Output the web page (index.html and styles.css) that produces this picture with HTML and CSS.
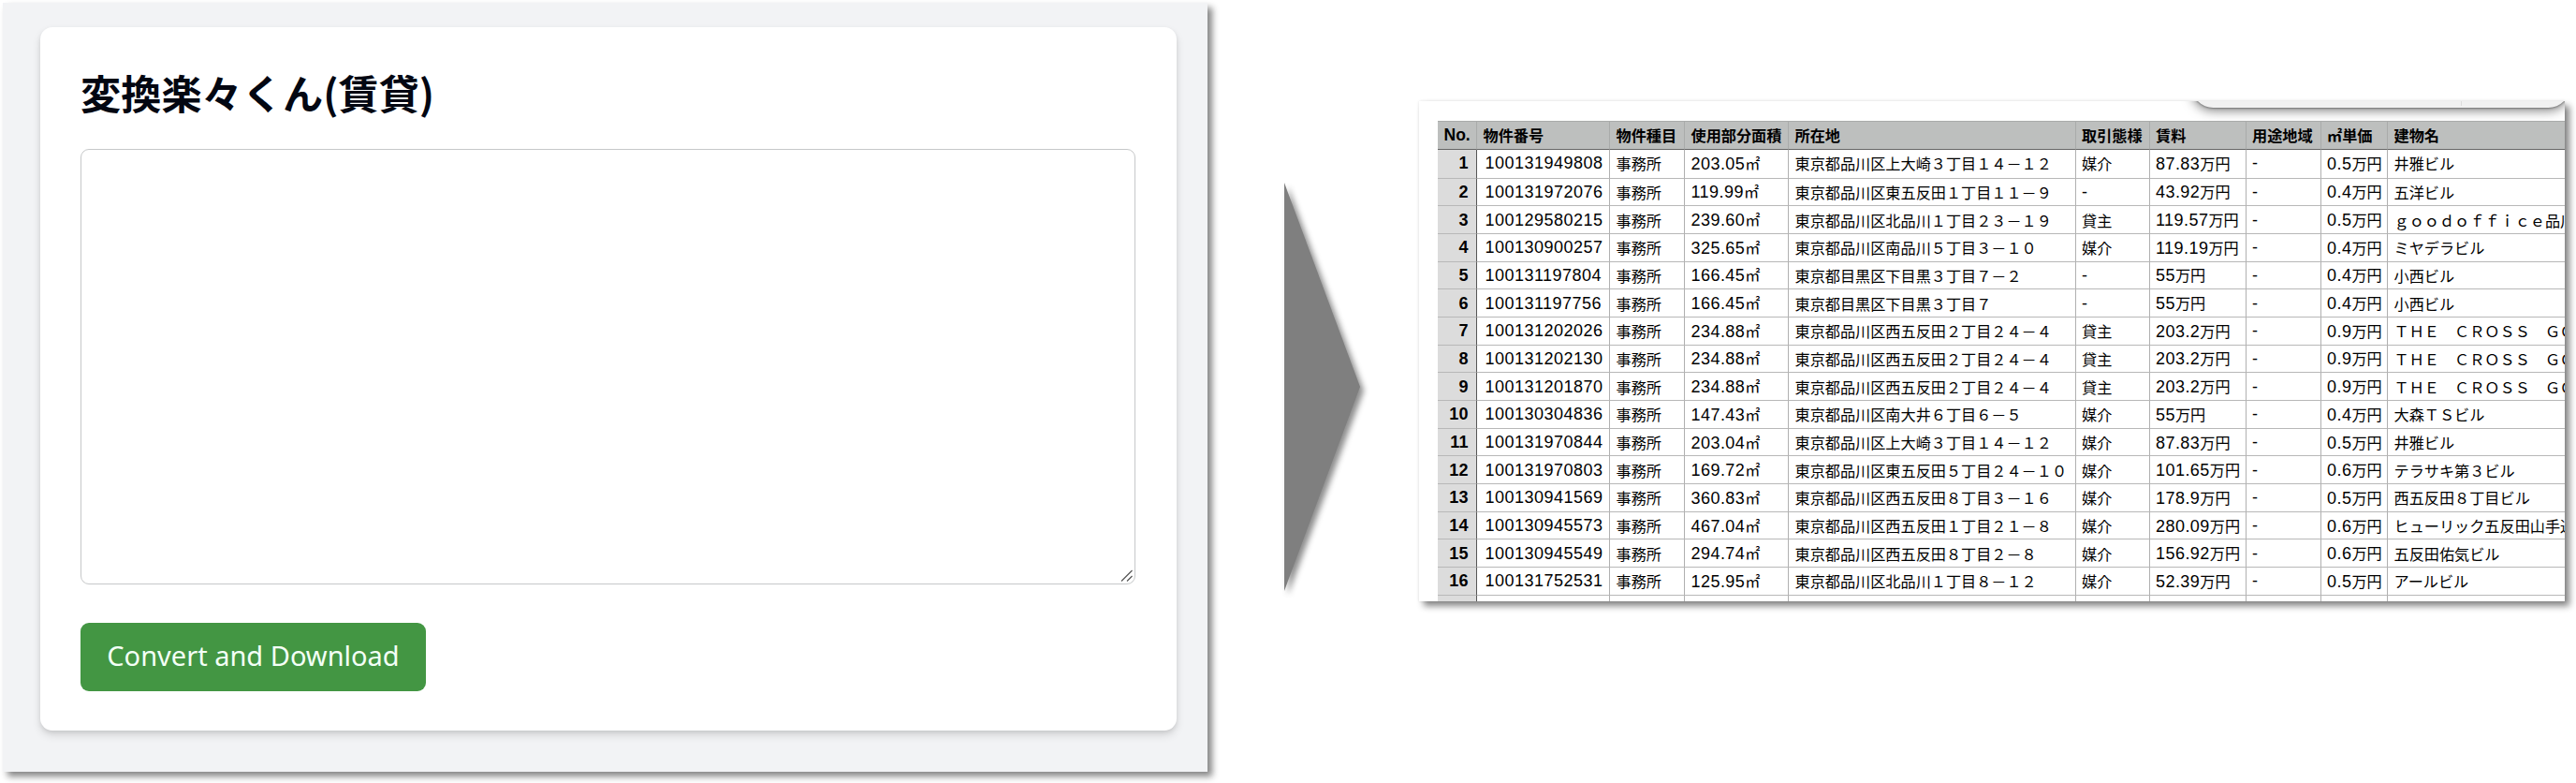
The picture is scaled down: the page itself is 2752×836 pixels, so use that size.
FILE: index.html
```html
<!DOCTYPE html>
<html lang="ja">
<head>
<meta charset="utf-8">
<title>変換楽々くん(賃貸)</title>
<link rel="stylesheet" href="styles.css">
</head>
<body>
<main class="stage">
  <section class="app">
    <div class="card">
      <h1 class="title">変換楽々くん(賃貸)</h1>
      <div class="field">
        <svg class="grip" viewBox="0 0 14 14"><path d="M1 12.500L12.500 1M7 12.500L12.500 7"/></svg>
      </div>
      <button class="convert">Convert and Download</button>
    </div>
  </section>
  <svg class="arrow" viewBox="0 0 81 436"><path d="M0 0L81 218L0 436Z"/></svg>
  <section class="sheet">
    <div class="viewport">
    <div class="toolbar"><i class="divider"></i></div>
    <table class="grid">
      <colgroup><col class="c0"><col class="c1"><col class="c2"><col class="c3"><col class="c4"><col class="c5"><col class="c6"><col class="c7"><col class="c8"><col class="c9"></colgroup>
      <thead>
        <tr><th class="no">No.</th><th>物件番号</th><th>物件種目</th><th>使用部分面積</th><th>所在地</th><th>取引態様</th><th>賃料</th><th>用途地域</th><th>㎡単価</th><th>建物名</th></tr>
      </thead>
      <tbody>
        <tr class="first"><th>1</th><td class="id">100131949808</td><td>事務所</td><td><span class="n">203.05</span>㎡</td><td>東京都品川区上大崎３丁目１４－１２</td><td>媒介</td><td><span class="n">87.83</span>万円</td><td class="n">-</td><td><span class="n">0.5</span>万円</td><td>井雅ビル</td></tr>
        <tr><th>2</th><td class="id">100131972076</td><td>事務所</td><td><span class="n">119.99</span>㎡</td><td>東京都品川区東五反田１丁目１１－９</td><td class="n">-</td><td><span class="n">43.92</span>万円</td><td class="n">-</td><td><span class="n">0.4</span>万円</td><td>五洋ビル</td></tr>
        <tr><th>3</th><td class="id">100129580215</td><td>事務所</td><td><span class="n">239.60</span>㎡</td><td>東京都品川区北品川１丁目２３－１９</td><td>貸主</td><td><span class="n">119.57</span>万円</td><td class="n">-</td><td><span class="n">0.5</span>万円</td><td>ｇｏｏｄｏｆｆｉｃｅ品川</td></tr>
        <tr><th>4</th><td class="id">100130900257</td><td>事務所</td><td><span class="n">325.65</span>㎡</td><td>東京都品川区南品川５丁目３－１０</td><td>媒介</td><td><span class="n">119.19</span>万円</td><td class="n">-</td><td><span class="n">0.4</span>万円</td><td>ミヤデラビル</td></tr>
        <tr><th>5</th><td class="id">100131197804</td><td>事務所</td><td><span class="n">166.45</span>㎡</td><td>東京都目黒区下目黒３丁目７－２</td><td class="n">-</td><td><span class="n">55</span>万円</td><td class="n">-</td><td><span class="n">0.4</span>万円</td><td>小西ビル</td></tr>
        <tr><th>6</th><td class="id">100131197756</td><td>事務所</td><td><span class="n">166.45</span>㎡</td><td>東京都目黒区下目黒３丁目７</td><td class="n">-</td><td><span class="n">55</span>万円</td><td class="n">-</td><td><span class="n">0.4</span>万円</td><td>小西ビル</td></tr>
        <tr><th>7</th><td class="id">100131202026</td><td>事務所</td><td><span class="n">234.88</span>㎡</td><td>東京都品川区西五反田２丁目２４－４</td><td>貸主</td><td><span class="n">203.2</span>万円</td><td class="n">-</td><td><span class="n">0.9</span>万円</td><td>ＴＨＥ　ＣＲＯＳＳ　ＧＯ</td></tr>
        <tr><th>8</th><td class="id">100131202130</td><td>事務所</td><td><span class="n">234.88</span>㎡</td><td>東京都品川区西五反田２丁目２４－４</td><td>貸主</td><td><span class="n">203.2</span>万円</td><td class="n">-</td><td><span class="n">0.9</span>万円</td><td>ＴＨＥ　ＣＲＯＳＳ　ＧＯ</td></tr>
        <tr><th>9</th><td class="id">100131201870</td><td>事務所</td><td><span class="n">234.88</span>㎡</td><td>東京都品川区西五反田２丁目２４－４</td><td>貸主</td><td><span class="n">203.2</span>万円</td><td class="n">-</td><td><span class="n">0.9</span>万円</td><td>ＴＨＥ　ＣＲＯＳＳ　ＧＯ</td></tr>
        <tr><th>10</th><td class="id">100130304836</td><td>事務所</td><td><span class="n">147.43</span>㎡</td><td>東京都品川区南大井６丁目６－５</td><td>媒介</td><td><span class="n">55</span>万円</td><td class="n">-</td><td><span class="n">0.4</span>万円</td><td>大森ＴＳビル</td></tr>
        <tr><th>11</th><td class="id">100131970844</td><td>事務所</td><td><span class="n">203.04</span>㎡</td><td>東京都品川区上大崎３丁目１４－１２</td><td>媒介</td><td><span class="n">87.83</span>万円</td><td class="n">-</td><td><span class="n">0.5</span>万円</td><td>井雅ビル</td></tr>
        <tr><th>12</th><td class="id">100131970803</td><td>事務所</td><td><span class="n">169.72</span>㎡</td><td>東京都品川区東五反田５丁目２４－１０</td><td>媒介</td><td><span class="n">101.65</span>万円</td><td class="n">-</td><td><span class="n">0.6</span>万円</td><td>テラサキ第３ビル</td></tr>
        <tr><th>13</th><td class="id">100130941569</td><td>事務所</td><td><span class="n">360.83</span>㎡</td><td>東京都品川区西五反田８丁目３－１６</td><td>媒介</td><td><span class="n">178.9</span>万円</td><td class="n">-</td><td><span class="n">0.5</span>万円</td><td>西五反田８丁目ビル</td></tr>
        <tr><th>14</th><td class="id">100130945573</td><td>事務所</td><td><span class="n">467.04</span>㎡</td><td>東京都品川区西五反田１丁目２１－８</td><td>媒介</td><td><span class="n">280.09</span>万円</td><td class="n">-</td><td><span class="n">0.6</span>万円</td><td>ヒューリック五反田山手通</td></tr>
        <tr><th>15</th><td class="id">100130945549</td><td>事務所</td><td><span class="n">294.74</span>㎡</td><td>東京都品川区西五反田８丁目２－８</td><td>媒介</td><td><span class="n">156.92</span>万円</td><td class="n">-</td><td><span class="n">0.6</span>万円</td><td>五反田佑気ビル</td></tr>
        <tr><th>16</th><td class="id">100131752531</td><td>事務所</td><td><span class="n">125.95</span>㎡</td><td>東京都品川区北品川１丁目８－１２</td><td>媒介</td><td><span class="n">52.39</span>万円</td><td class="n">-</td><td><span class="n">0.5</span>万円</td><td>アールビル</td></tr>
        <tr><th></th><td></td><td></td><td></td><td></td><td></td><td></td><td></td><td></td><td></td></tr>
      </tbody>
    </table>
    </div>
  </section>
</main>
</body>
</html>
```
FILE: styles.css
```css
* { box-sizing: border-box; }
body { margin: 0; background: #fff; font-family: "Noto Sans CJK JP", sans-serif; }
.stage { display: flex; align-items: flex-start; width: 2752px; height: 836px; padding: 3px 0 0 3px; overflow: hidden; }
.app { flex: none; width: 1287px; height: 821px; padding: 26px 33px 44px 40px; background: #f2f3f5; box-shadow: 5px 5px 7px rgba(0,0,0,.48); }
.card { height: 751px; padding: 40px 44px 0 43px; background: #fff; border-radius: 13px; box-shadow: 0 5px 10px rgba(0,0,0,.12), 0 2px 4px rgba(0,0,0,.08); }
.title { margin: 0 0 32px; font-size: 43.200px; line-height: 58px; font-weight: 700; color: #030712; white-space: nowrap; }
.field { display: flex; justify-content: flex-end; align-items: flex-end; width: 1127px; height: 465px; padding: 1px; border: 1.5px solid #c6c8c9; border-radius: 9px; }
.grip { width: 14px; height: 14px; fill: none; stroke: #555; stroke-width: 1.2; }
.convert { display: block; width: 369px; height: 73px; margin: 41px 0 0; padding: 0 0 3px; border: 0; border-radius: 9px; background: #439643; color: #f3fff6; font: 400 29px/70px "Noto Sans", sans-serif; white-space: nowrap; }
.arrow { flex: none; width: 81px; height: 436px; margin: 192px 0 0 82px; overflow: visible; fill: #7f7f7f; filter: drop-shadow(4px 4px 3px rgba(0,0,0,.45)); }
.sheet { flex: none; width: 1224px; height: 534px; margin: 105px 0 0 63px; background: #fff; box-shadow: 5px 5px 7px rgba(0,0,0,.48), 0 0 3px rgba(0,0,0,.1); }
.viewport { position: relative; height: 534px; padding: 21px 0 0 20px; overflow: hidden; }
.toolbar { position: absolute; top: -40px; right: -6px; width: 405px; height: 47px; border-radius: 24px; background: #f1f1f1; box-shadow: 0 3px 12px rgba(0,0,0,.5), 0 1px 2px rgba(0,0,0,.3); }
.divider { position: absolute; right: 116px; bottom: 2px; width: 1px; height: 30px; background: #ddd; }
.grid { position: relative; width: 1220px; border-collapse: separate; border-spacing: 0; border-top: 1px solid #a9abaa; table-layout: fixed; font-size: 16.150px; color: #000; }
.grid th, .grid td { height: 29.700px; padding: 0 0 0 6.500px; border-right: 1px solid #b0b0b0; border-bottom: 1px solid #b8b8b8; text-align: left; font-weight: 400; line-height: 26px; white-space: nowrap; }
.grid .first th, .grid .first td { height: 31px; padding-bottom: 1px; }
.grid thead th { height: 29.500px; background: #bdbfbe; font-weight: 700; border-right-color: #a9abaa; border-bottom-color: #666; }
.grid tbody th { padding: 0 8px 0 0; background: #dcdcdc; border-right-color: #555; text-align: right; font: 700 18px/26px "Liberation Sans", sans-serif; letter-spacing: .4px; }
.c0 { width: 42px; } .c1 { width: 142px; } .c2 { width: 80px; } .c3 { width: 111px; } .c4 { width: 306.500px; } .c5 { width: 79px; } .c6 { width: 103px; } .c7 { width: 80px; } .c8 { width: 71.500px; } .c9 { width: 205px; }
.grid .id, .grid .n { font: 400 18px/26px "Liberation Sans", sans-serif; letter-spacing: .45px; }
.grid .id { padding-left: 8.500px; letter-spacing: .48px; }
.grid thead .no { font: 700 17.500px/26px "Liberation Sans", sans-serif; }
```
